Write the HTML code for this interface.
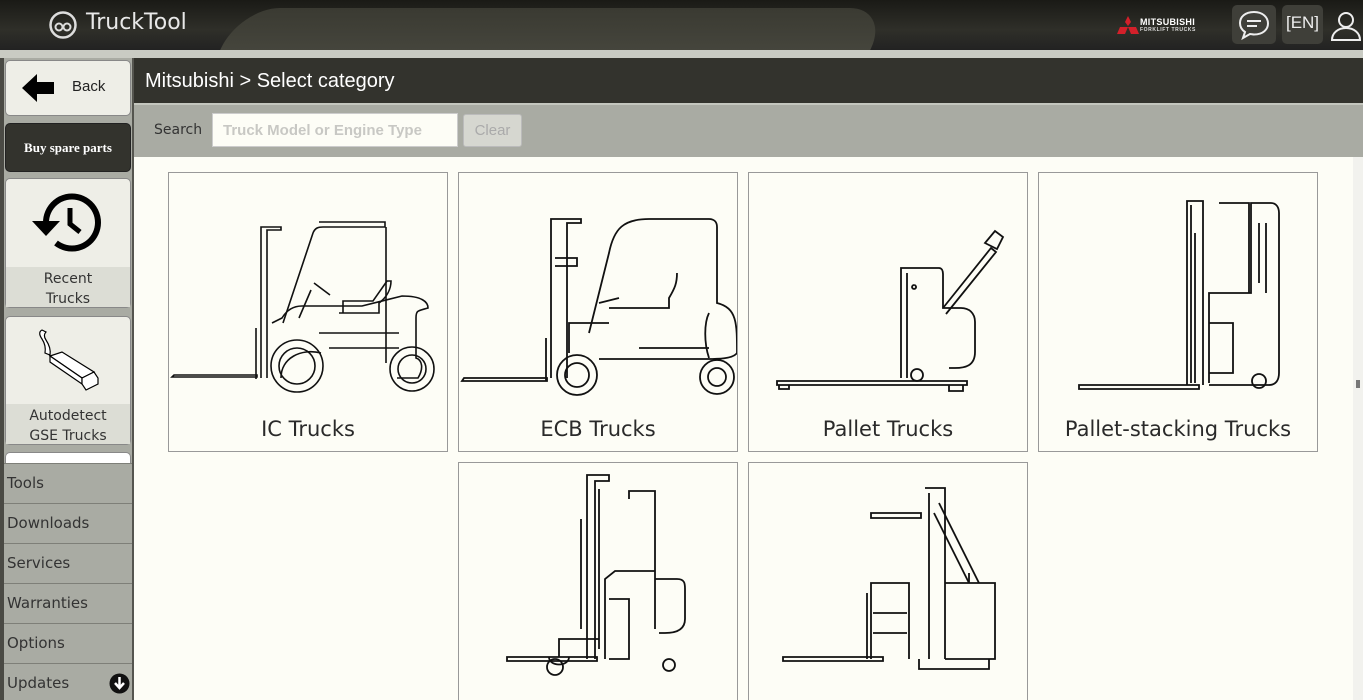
<!DOCTYPE html>
<html style="overflow:hidden;width:1363px;height:700px"><head><meta charset="utf-8"><style>
*{margin:0;padding:0;box-sizing:border-box}
body{width:1363px;height:700px;overflow:hidden;background:#fdfdf6;font-family:"Liberation Sans",sans-serif;position:relative}
.hdr{position:absolute;left:0;top:0;width:1363px;height:50px;background:linear-gradient(#1a1a16,#2f2f29 60%,#222)}
.hdr .mid{position:absolute;left:230px;top:8px;width:650px;height:42px;background:linear-gradient(#3a3a32,#45453c);border-radius:40px 40px 0 0;transform:skewX(-25deg)}
.strip{position:absolute;left:0;top:50px;width:1363px;height:8px;background:#c9cbc3}
.side{position:absolute;left:0;top:58px;width:134px;height:642px;background:#a9aba3;border-left:4px solid #4a4a44;border-right:2px solid #55554f}
.btn{position:absolute;left:5px;width:126px;background:#eeeee7;border-radius:5px;border:1px solid #888}
.title{position:absolute;left:134px;top:58px;width:1229px;height:45px;background:#33332d;color:#fff;padding:12px 0 0 11px;font-family:"Liberation Sans",sans-serif;font-size:20px}
.search{position:absolute;left:134px;top:103px;width:1229px;height:54px;background:#a9aba3;border-top:2px solid #c4c6be}
.card{position:absolute;width:280px;height:280px;border:1px solid #999;background:#fdfdf6;overflow:hidden}
.card .lb{position:absolute;left:0;right:0;top:244px;text-align:center;color:#2a2a2a;font-family:"DejaVu Sans","Liberation Sans",sans-serif;font-size:21px}
.menu{position:absolute;left:4px;width:128px;height:40px;border-top:1px solid #7e7f78;color:#333;padding:10px 0 0 3px;font-family:"DejaVu Sans","Liberation Sans",sans-serif;font-size:15px}
svg{position:absolute}
</style></head><body>
<div class="hdr"><div class="mid"></div>
<svg style="left:48px;top:10px" width="30" height="30" viewBox="0 0 30 30"><circle cx="15" cy="15" r="12.5" fill="none" stroke="#ddd" stroke-width="2.5"/><circle cx="11" cy="17" r="3.5" fill="none" stroke="#ddd" stroke-width="2"/><circle cx="19" cy="17" r="3.5" fill="none" stroke="#ddd" stroke-width="2"/></svg>
<div style="position:absolute;left:86px;top:10px;color:#e8e8e8;font-size:22px;font-family:'DejaVu Sans','Liberation Sans',sans-serif">TruckTool</div>
<svg style="left:1117px;top:16px" width="22" height="18" viewBox="0 0 22 18"><polygon points="11,0 14,6 11,10 8,6" fill="#d3202a"/><polygon points="0,18 3,11 11,11 8,18" fill="#d3202a"/><polygon points="22,18 19,11 11,11 14,18" fill="#d3202a"/></svg>
<div style="position:absolute;left:1140px;top:17px;color:#fff;font-size:9px;font-weight:bold;letter-spacing:.3px">MITSUBISHI</div>
<div style="position:absolute;left:1140px;top:27px;color:#ddd;font-size:5px;font-weight:bold;letter-spacing:.6px">FORKLIFT TRUCKS</div>
<div style="position:absolute;left:1232px;top:5px;width:44px;height:39px;background:#3f3f39;border-radius:5px"></div>
<svg style="left:1236px;top:9px" width="36" height="32" viewBox="0 0 36 32"><path d="M18 3C9 3 4 8 4 14c0 4 2 7 5 9l-2 6 7-4c1 0 3 .5 4 .5 9 0 14-5 14-11S27 3 18 3z" fill="none" stroke="#eee" stroke-width="2"/><line x1="11" y1="12" x2="25" y2="12" stroke="#eee" stroke-width="2"/><line x1="11" y1="17" x2="21" y2="17" stroke="#eee" stroke-width="2"/></svg>
<div style="position:absolute;left:1282px;top:5px;width:41px;height:39px;background:#3f3f39;border-radius:5px;color:#eee;font-size:17px;text-align:center;padding-top:8px">[EN]</div>
<svg style="left:1330px;top:10px" width="32" height="32" viewBox="0 0 32 32"><circle cx="16" cy="10" r="7" fill="none" stroke="#eee" stroke-width="2"/><path d="M2 30c0-7 6-12 14-12s14 5 14 12z" fill="none" stroke="#eee" stroke-width="2"/></svg>
</div>
<div class="strip"></div>
<div class="side"></div>
<div class="btn" style="top:60px;height:56px"></div>
<svg style="left:20px;top:72px" width="36" height="32" viewBox="0 0 36 32"><polygon points="2,16 17,2 17,10 34,10 34,22 17,22 17,30" fill="#000"/></svg>
<div style="position:absolute;left:72px;top:78px;font-size:15px;color:#222">Back</div>
<div class="btn" style="top:123px;height:49px;background:#33332d;border-color:#222"></div>
<div style="position:absolute;left:5px;width:126px;top:140px;text-align:center;font-size:13px;font-weight:bold;color:#fff;font-family:'Liberation Serif',serif">Buy spare parts</div>
<div class="btn" style="top:178px;height:130px"><div style="position:absolute;left:0;right:0;bottom:0;height:40px;background:#dcddd5"></div></div>
<svg style="left:30px;top:190px" width="74" height="66" viewBox="0 0 74 66"><path d="M16 33A26 26 0 1 1 26 53" fill="none" stroke="#000" stroke-width="6"/><polygon points="2,31 30,31 16,46" fill="#000"/><path d="M40 18V34L50 42" fill="none" stroke="#000" stroke-width="5"/></svg>
<div style="position:absolute;left:5px;width:126px;top:269px;text-align:center;color:#333;line-height:20px;font-family:'DejaVu Sans',sans-serif;font-size:14px">Recent<br>Trucks</div>
<div class="btn" style="top:316px;height:129px"><div style="position:absolute;left:0;right:0;bottom:0;height:40px;background:#dcddd5"></div></div>
<svg style="left:34px;top:326px" width="70" height="70" viewBox="0 0 70 70" fill="#fff" stroke="#000" stroke-width="1.2"><path d="M8 4c-4 2-2 6 0 9s4 8 3 14l5 2c1-6-2-12-4-15s-2-6 0-8z"/><polygon points="16,30 28,26 60,46 48,52"/><polygon points="16,30 48,52 48,58 16,36"/><polygon points="48,52 60,46 64,52 64,58 52,64 48,58"/></svg>
<div style="position:absolute;left:5px;width:126px;top:406px;text-align:center;color:#333;line-height:20px;font-family:'DejaVu Sans',sans-serif;font-size:14px">Autodetect<br>GSE Trucks</div>
<div class="btn" style="top:452px;height:12px;border-bottom:none;border-radius:5px 5px 0 0;background:#fff"></div>
<div class="menu" style="top:463px">Tools</div>
<div class="menu" style="top:503px">Downloads</div>
<div class="menu" style="top:543px">Services</div>
<div class="menu" style="top:583px">Warranties</div>
<div class="menu" style="top:623px">Options</div>
<div class="menu" style="top:663px">Updates</div>
<svg style="left:109px;top:673px" width="21" height="21" viewBox="0 0 21 21"><circle cx="10.5" cy="10.5" r="10" fill="#111"/><path d="M10.5 4v10M6 10l4.5 5 4.5-5" stroke="#fff" stroke-width="2.5" fill="none"/></svg>
<div class="title">Mitsubishi &gt; Select category</div>
<div class="search">
<div style="position:absolute;left:20px;top:17px;color:#333;font-family:'DejaVu Sans',sans-serif;font-size:14px">Search</div>
<div style="position:absolute;left:78px;top:8px;width:246px;height:34px;background:#fdfdf6;border:1px solid #ccc;color:#c8c8c4;font-size:15px;font-weight:bold;padding:8px 10px">Truck Model or Engine Type</div>
<div style="position:absolute;left:329px;top:9px;width:59px;height:33px;background:#d6d7d0;border:1px solid #bbb;border-radius:3px;color:#aaa;font-size:15px;text-align:center;padding-top:7px">Clear</div>
</div>
<div style="position:absolute;left:1353px;top:157px;width:10px;height:543px;background:#f2f2ee"></div>
<div style="position:absolute;left:1356px;top:380px;width:4px;height:8px;background:#777"></div>

<div class="card" style="left:168px;top:172px">
<svg style="left:0;top:40px" width="280" height="185" viewBox="0 0 280 185" fill="none" stroke="#111" stroke-width="1.6">
<path d="M3 164h85v-2H5z M87 166V115"/><path d="M92 165V14h20v3H98V165"/><path d="M112 165c0-20 20-30 40-25M103 110l10-5c6-10 14-12 20-12h60l40-10c20 0 26 6 26 12-10 3-12 2-12 10v40c6 2 8 10 2 20H228"/><path d="M114 110L144 20c2-5 5-6 10-6h62v-5H150M217 14V150"/><path d="M160 135h70M150 120h80M170 100h40V90c8-6 12-14 12-22h-4l-14 20h-30v12"/><path d="M145 70l16 12M130 105l12-28"/>
<circle cx="128" cy="153" r="26"/><circle cx="128" cy="153" r="18"/><circle cx="243" cy="156" r="22"/><circle cx="243" cy="156" r="14"/>
</svg><div class="lb">IC Trucks</div></div>

<div class="card" style="left:458px;top:172px">
<svg style="left:0;top:40px" width="280" height="185" viewBox="0 0 280 185" fill="none" stroke="#111" stroke-width="1.8">
<path d="M3 168h85v-3H5z M87 168V125"/><path d="M92 165V6h30v4H108V165M96 45h22v8H96"/><path d="M130 120l20-80c5-25 15-34 40-34h60c6 0 8 4 8 8V90c20 5 20 20 20 50-4 6-20 6-30 6H140"/><path d="M150 95h60v-10c6-10 8-15 8-25M140 90l20-5M180 135h70M250 100c-5 10-5 30 0 45"/><path d="M110 140v-30h40"/>
<circle cx="118" cy="162" r="20"/><circle cx="118" cy="162" r="12"/><circle cx="258" cy="164" r="17"/><circle cx="258" cy="164" r="9"/>
</svg><div class="lb">ECB Trucks</div></div>

<div class="card" style="left:748px;top:172px">
<svg style="left:0;top:40px" width="280" height="185" viewBox="0 0 280 185" fill="none" stroke="#111" stroke-width="1.8">
<path d="M28 168h190v4H28z M30 172v4h10v-4M200 172v6h14v-6"/><path d="M152 165V55h38c3 0 4 3 4 6V95h18c8 0 14 5 14 14v30c0 14-10 16-20 16H200"/><path d="M158 165V60M165 72a2 2 0 1 0 .1 0M194 95l48-60 5 4-50 62"/><path d="M236 30l10-12 8 6-6 12z"/>
<circle cx="168" cy="162" r="6"/>
</svg><div class="lb">Pallet Trucks</div></div>

<div class="card" style="left:1038px;top:172px">
<svg style="left:0;top:20px" width="280" height="205" viewBox="0 0 280 205" fill="none" stroke="#111" stroke-width="1.8">
<path d="M40 192h120v4H40z"/><path d="M148 192V8h16V192M152 12V190M156 40V190"/><path d="M170 190V100h42V10h20c5 0 8 4 8 10V180c0 8-4 12-10 12H170"/><path d="M180 10h30v90M170 130h24v50h-24"/><path d="M220 30v60M227 30v70"/>
<circle cx="220" cy="188" r="7"/>
</svg><div class="lb">Pallet-stacking Trucks</div></div>

<div class="card" style="left:458px;top:462px;height:250px">
<svg style="left:0;top:6px" width="280" height="210" viewBox="0 0 280 210" fill="none" stroke="#111" stroke-width="1.8">
<path d="M48 188h90v4H48z"/><path d="M128 190V6h22v6H136V190M140 20V180M122 50V160"/><path d="M146 190V110l10-8h40V22h-26v8M196 60V160M196 110h22c8 0 8 5 8 10v30c0 10-8 14-20 14H200"/><path d="M150 130h20v60h-20"/><path d="M90 188c0 10 20 10 20 0M100 188V170h40"/>
<circle cx="96" cy="198" r="8"/><circle cx="210" cy="196" r="6"/>
</svg></div>

<div class="card" style="left:748px;top:462px;height:250px">
<svg style="left:0;top:20px" width="280" height="190" viewBox="0 0 280 190" fill="none" stroke="#111" stroke-width="1.8">
<path d="M34 174h100v4H34z"/><path d="M122 176V100h38V176M118 110V176"/><path d="M122 30h50v5h-50z M176 5h20V176M180 10V176"/><path d="M190 20l40 80M185 30l35 70"/><path d="M196 100h50v76h-50M220 100V90"/><path d="M170 176v10h70v-10"/><path d="M124 130h34M124 150h34"/>
</svg></div>
</body></html>
